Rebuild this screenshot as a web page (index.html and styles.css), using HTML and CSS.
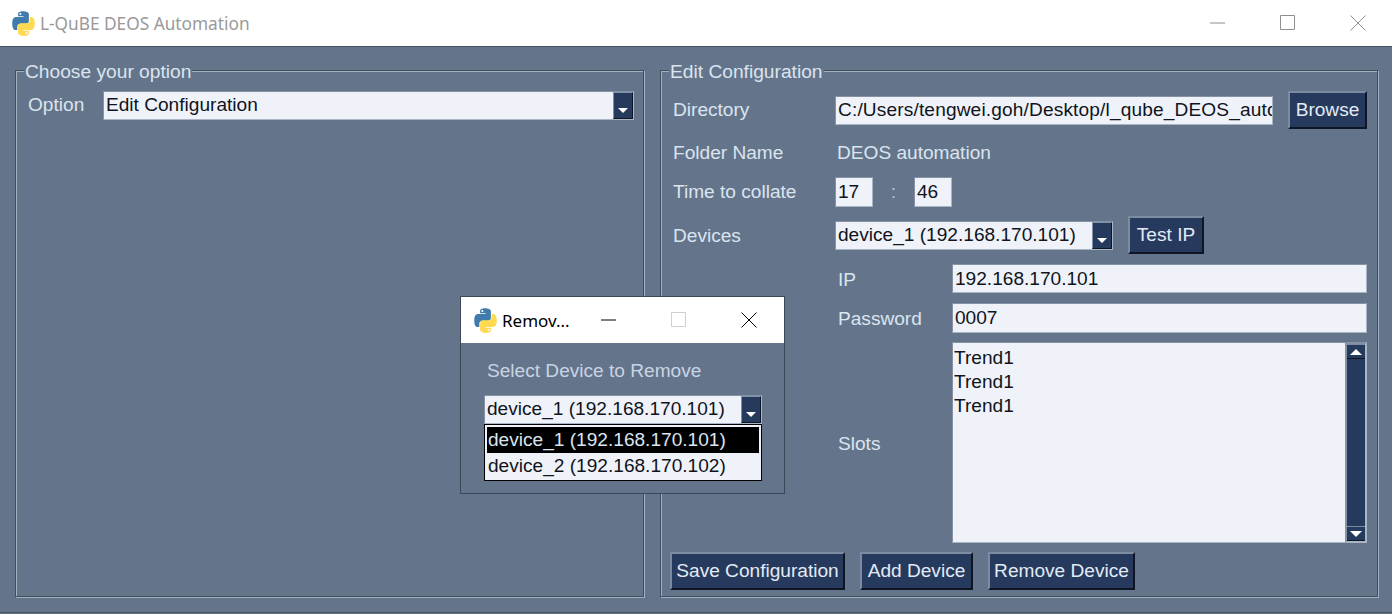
FILE: index.html
```html
<!DOCTYPE html>
<html lang="en">
<head>
  <meta charset="UTF-8" />
  <title>L-QuBE DEOS Automation</title>
  <link rel="stylesheet" href="styles.css">
</head>
<body>
  <svg class="defs" width="0" height="0">
    <symbol id="python" viewBox="0 0 24 24">
      <path fill="#3f7cad" fill-rule="evenodd" d="M11.9 1C6.9 1 7.2 3.2 7.2 3.2v2.3h4.8v.7H5.3S2 5.8 2 11.9s2.8 5.9 2.8 5.9h1.7v-2.8s-.1-2.8 2.8-2.8h4.8s2.7 0 2.7-2.6V3.7S16.8 1 11.9 1zM9.2 2.6a.9.9 0 1 1 0 1.8.9.9 0 0 1 0-1.8z"/>
      <path fill="#ffd94f" fill-rule="evenodd" transform="rotate(180 12 12)" d="M11.9 1C6.9 1 7.2 3.2 7.2 3.2v2.3h4.8v.7H5.3S2 5.8 2 11.9s2.8 5.9 2.8 5.9h1.7v-2.8s-.1-2.8 2.8-2.8h4.8s2.7 0 2.7-2.6V3.7S16.8 1 11.9 1zM9.2 2.6a.9.9 0 1 1 0 1.8.9.9 0 0 1 0-1.8z"/>
    </symbol>
    <symbol id="win-min" viewBox="0 0 16 16"><path d="M0 8h15" stroke="currentColor" fill="none"/></symbol>
    <symbol id="win-max" viewBox="0 0 16 16"><path d="M.5 .5h14v14h-14z" stroke="currentColor" fill="none"/></symbol>
    <symbol id="win-close" viewBox="0 0 16 16"><path d="M.5 .5l15 15M15.5 .5l-15 15" stroke="currentColor" fill="none"/></symbol>
  </svg>

  <header class="titlebar">
    <svg class="app-icon"><use href="#python"/></svg>
    <span class="title">L-QuBE DEOS Automation</span>
    <div class="controls">
      <span class="ctl"><svg><use href="#win-min"/></svg></span>
      <span class="ctl"><svg><use href="#win-max"/></svg></span>
      <span class="ctl"><svg><use href="#win-close"/></svg></span>
    </div>
  </header>

  <main class="content">
    <section class="frame frame-left">
      <h2 class="legend">Choose your option</h2>
      <div class="row row-option">
        <span class="label label-option">Option</span>
        <div class="combo combo-wide">
          <span class="combo-text">Edit Configuration</span>
          <span class="arrow"></span>
        </div>
      </div>
    </section>

    <section class="frame frame-right">
      <h2 class="legend">Edit Configuration</h2>

      <div class="row row-dir">
        <span class="label">Directory</span>
        <div class="entry entry-dir">C:/Users/tengwei.goh/Desktop/l_qube_DEOS_auto</div>
        <button class="btn btn-browse">Browse</button>
      </div>

      <div class="row row-folder">
        <span class="label">Folder Name</span>
        <span class="value">DEOS automation</span>
      </div>

      <div class="row row-time">
        <span class="label">Time to collate</span>
        <div class="entry entry-time">17</div>
        <span class="colon">:</span>
        <div class="entry entry-time">46</div>
      </div>

      <div class="row row-devices">
        <span class="label label-low">Devices</span>
        <div class="combo combo-device">
          <span class="combo-text">device_1 (192.168.170.101)</span>
          <span class="arrow"></span>
        </div>
        <button class="btn btn-test">Test IP</button>
      </div>

      <div class="row row-ip">
        <span class="sublabel">IP</span>
        <div class="entry entry-fill">192.168.170.101</div>
      </div>

      <div class="row row-pass">
        <span class="sublabel">Password</span>
        <div class="entry entry-fill">0007</div>
      </div>

      <div class="row row-slots">
        <span class="sublabel">Slots</span>
        <div class="slots">
          <div class="slots-text">
            <div>Trend1</div>
            <div>Trend1</div>
            <div>Trend1</div>
          </div>
          <div class="scrollbar">
            <span class="scroll-btn"><i class="tri-up"></i></span>
            <span class="scroll-trough"></span>
            <span class="scroll-btn"><i class="tri-down"></i></span>
          </div>
        </div>
      </div>

      <div class="row row-actions">
        <button class="btn btn-save">Save Configuration</button>
        <button class="btn btn-add">Add Device</button>
        <button class="btn btn-remove">Remove Device</button>
      </div>
    </section>
  </main>

  <div class="dialog">
    <div class="dialog-bar">
      <svg class="app-icon"><use href="#python"/></svg>
      <span class="dialog-title">Remov...</span>
      <div class="controls">
        <span class="ctl"><svg><use href="#win-min"/></svg></span>
        <span class="ctl ctl-off"><svg><use href="#win-max"/></svg></span>
        <span class="ctl"><svg><use href="#win-close"/></svg></span>
      </div>
    </div>
    <div class="dialog-body">
      <p class="dialog-label">Select Device to Remove</p>
      <div class="combo combo-dialog">
        <span class="combo-text">device_1 (192.168.170.101)</span>
        <span class="arrow"></span>
      </div>
      <ul class="dropdown">
        <li class="selected">device_1 (192.168.170.101)</li>
        <li>device_2 (192.168.170.102)</li>
      </ul>
    </div>
  </div>
</body>
</html>
```

FILE: styles.css
```css
* {
  box-sizing: border-box;
}

body {
  margin: 0;
  height: 614px;
  overflow: hidden;
  position: relative;
  background: #64758b;
  font-family: "Liberation Sans", Arial, sans-serif;
  font-size: 19.1px;
  color: #dbe4ef;
}

.defs {
  position: absolute;
}

/* title bar */
.titlebar {
  height: 47px;
  background: #fff;
  border-bottom: 1px solid #465362;
  display: flex;
  align-items: center;
  padding-left: 10px;
}

.app-icon {
  width: 27px;
  height: 27px;
  flex: none;
}

.title {
  margin-left: 3px;
  font-family: "Noto Sans", sans-serif;
  font-size: 17.25px;
  color: #9a9a9a;
}

.controls {
  margin-left: auto;
  display: flex;
  color: #8f8f8f;
}

.ctl {
  width: 70px;
  height: 46px;
  display: flex;
  align-items: center;
  justify-content: center;
}

.ctl svg {
  width: 16px;
  height: 16px;
}

.titlebar .controls {
  margin-right: -1px;
}

/* main area */
.content {
  height: 566px;
  padding: 23px 0 0 15px;
  display: flex;
  gap: 16px;
  border-bottom: 1px solid #465362;
}

.frame {
  position: relative;
  height: 527px;
  border: 1px solid #414e5e;
  box-shadow: inset 1px 1px 0 #a3b0c0, 1px 1px 0 #a3b0c0;
  display: flex;
  flex-direction: column;
}

.frame-left {
  width: 629px;
  padding: 20px 9px 0 12px;
}

.frame-right {
  width: 718px;
  padding: 20px 10px 0 9px;
}

.legend {
  position: absolute;
  top: -10px;
  left: 8px;
  margin: 0;
  padding: 0 1px;
  background: #64758b;
  font-size: 19.2px;
  font-weight: normal;
  line-height: 22px;
}

.row {
  display: flex;
  align-items: center;
  flex: none;
}

.label {
  width: 165px;
  padding-left: 3px;
  flex: none;
}

.label-option {
  width: 75px;
  padding-left: 0;
  padding-bottom: 2px;
}

.label-low {
  padding-top: 2px;
}

.sublabel {
  width: 114px;
  margin-left: 168px;
  padding-top: 2px;
  flex: none;
}

.value {
  margin-left: 2px;
}

.row-option {
  height: 29px;
}

.row-dir {
  height: 38px;
}

.row-folder {
  height: 38px;
  margin-top: 5px;
}

.row-time {
  height: 30px;
  margin-top: 5px;
}

.row-devices {
  height: 38px;
  margin-top: 9px;
}

.row-ip {
  height: 29px;
  margin-top: 10px;
}

.row-pass {
  height: 30px;
  margin-top: 10px;
}

.row-slots {
  height: 201px;
  margin-top: 9px;
}

.row-actions {
  height: 38px;
  margin-top: 9px;
  gap: 15px;
}

/* entries */
.entry,
.combo,
.slots {
  background: #eff3f9;
  color: #10141c;
  border: 1px solid #a9b5c4;
  border-top-color: #8592a4;
  border-left-color: #8592a4;
}

.entry {
  height: 100%;
  padding: 0 2px;
  line-height: 28px;
  white-space: nowrap;
  overflow: hidden;
}

.entry-dir {
  width: 438px;
  height: 29px;
  margin-right: 15px;
  line-height: 26px;
  letter-spacing: 0.15px;
}

.entry-time {
  width: 38px;
}

.colon {
  width: 41px;
  text-align: center;
  color: #b8c4d2;
}

.entry-fill {
  flex: 1;
}

/* combo boxes */
.combo {
  display: flex;
  align-items: center;
  height: 29px;
  padding-left: 2px;
  white-space: nowrap;
}

.combo-text {
  flex: 1;
}

.combo-wide .combo-text,
.combo-dialog .combo-text {
  padding-bottom: 2px;
}

.combo-wide {
  width: 531px;
}

.combo-device {
  width: 278px;
  margin-right: 15px;
}

.arrow {
  width: 20px;
  height: 27px;
  flex: none;
  position: relative;
  background: #263a5e;
  border: 1px solid;
  border-color: #8090a6 #0e1626 #0e1626 #8090a6;
}

.arrow::after {
  content: "";
  position: absolute;
  left: 4px;
  bottom: 5px;
  border: 5px solid transparent;
  border-bottom-width: 0;
  border-top-color: #fff;
}

/* buttons */
.btn {
  height: 38px;
  padding: 0;
  background: #263a5e;
  color: #e3eaf4;
  font: inherit;
  border: 2px solid;
  border-color: #7d8ba0 #0e1626 #0e1626 #7d8ba0;
}

.btn-browse {
  width: 79px;
}

.btn-test {
  width: 76px;
}

.btn-save {
  width: 175px;
}

.btn-add {
  width: 113px;
}

.btn-remove {
  width: 147px;
}

/* slots list */
.slots {
  flex: 1;
  height: 100%;
  display: flex;
}

.slots-text {
  flex: 1;
  padding: 3px 1px;
  line-height: 24px;
}

.scrollbar {
  width: 22px;
  margin: -1px -1px -1px 0;
  display: flex;
  flex-direction: column;
  background: #64758b;
  border: 2px solid;
  border-color: #8592a4 #a9b5c4 #a9b5c4 #8592a4;
}

.scroll-btn {
  height: 15px;
  flex: none;
  background: #263a5e;
  border-top: 1px solid #7d8ba0;
  border-bottom: 1px solid #0e1626;
  display: flex;
  align-items: center;
  justify-content: center;
}

.scroll-trough {
  flex: 1;
  background: #263a5e;
}

.tri-up,
.tri-down {
  border: 6px solid transparent;
}

.tri-up {
  border-top-width: 0;
  border-bottom-color: #fff;
}

.tri-down {
  border-bottom-width: 0;
  border-top-color: #fff;
}

/* remove device dialog */
.dialog {
  position: absolute;
  left: 460px;
  top: 296px;
  width: 325px;
  height: 198px;
  background: #64758b;
  border: 1px solid #3c4856;
}

.dialog-bar {
  height: 46px;
  background: #fff;
  display: flex;
  align-items: center;
  padding-left: 11px;
}

.dialog-title {
  margin-left: 3px;
  font-family: "Noto Sans", sans-serif;
  font-size: 17px;
  color: #000;
}

.dialog .controls {
  color: #000;
}

.ctl-off {
  color: #cfcfcf;
}

.dialog-body {
  position: relative;
  padding: 16px 0 0 23px;
}

.dialog-label {
  margin: 0 0 12px 3px;
  line-height: 24px;
  color: #c9d4e2;
}

.combo-dialog {
  width: 278px;
}

.dropdown {
  position: absolute;
  left: 23px;
  top: 81px;
  width: 278px;
  margin: 0;
  padding: 2px 2px 1px;
  list-style: none;
  background: #eff3f9;
  color: #10141c;
  border: 1px solid #000;
}

.dropdown li {
  height: 26px;
  line-height: 26px;
  padding-left: 1px;
  white-space: nowrap;
}

.dropdown .selected {
  background: #000;
  color: #dbe4ef;
}
```
